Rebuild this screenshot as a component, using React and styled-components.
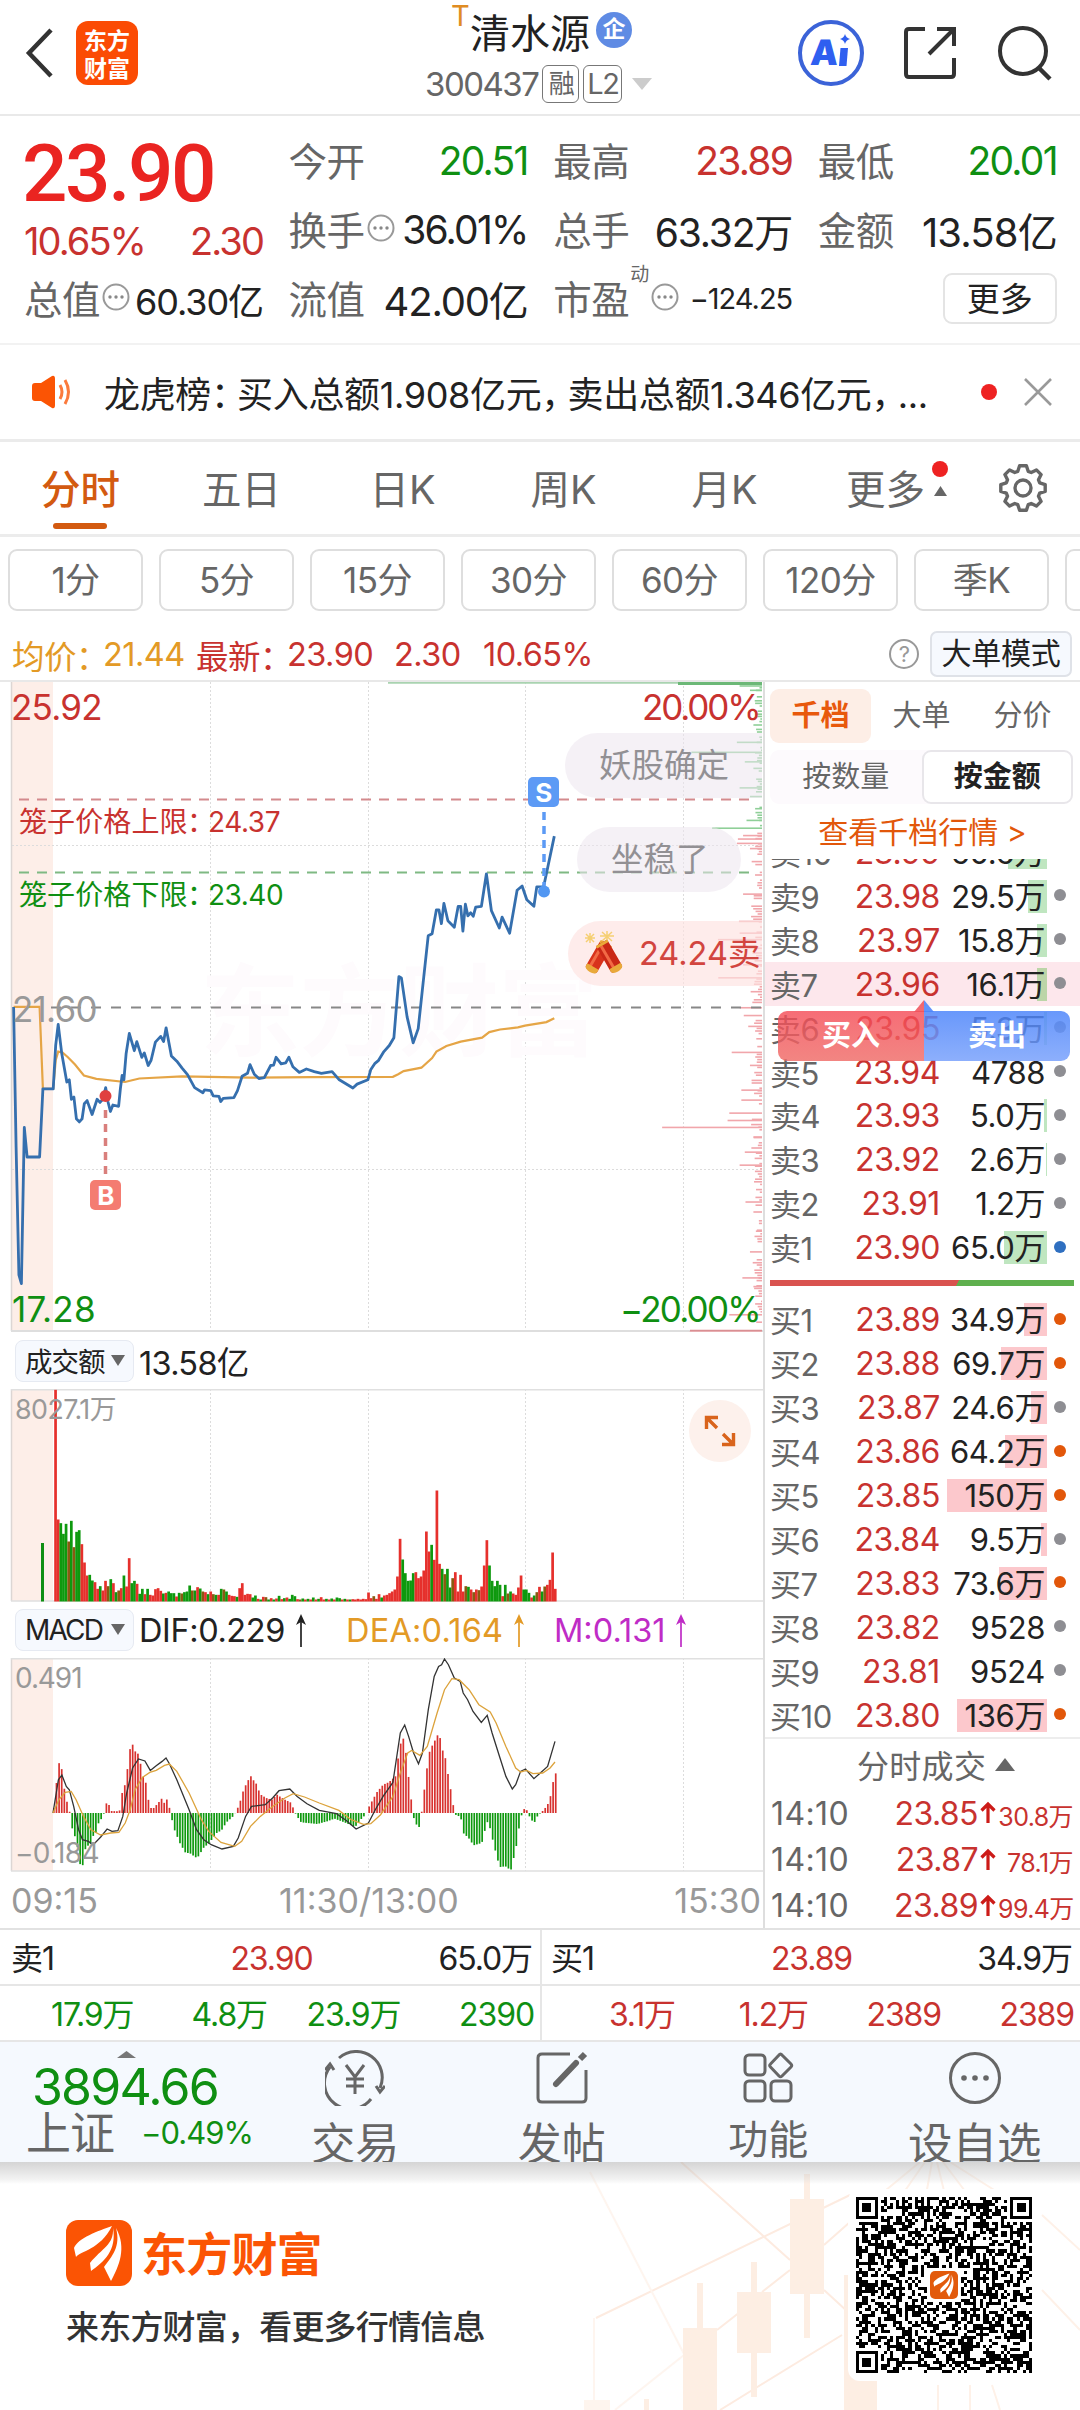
import React from "react";
import styled, { createGlobalStyle, css } from "styled-components";

const RED = "#c8322f";
const GREEN = "#0f8f12";
const GRAY = "#666";
const INK = "#222";
const ORANGE = "#e2570a";
const GOLD = "#e39a26";
const FONT = `Inter, "Noto Sans CJK SC", sans-serif`;

const Global = createGlobalStyle`
  * { box-sizing: border-box; }
  body { margin: 0; background: #fff; }
  svg { display: block; flex: none; }
  svg text { font-family: ${FONT}; }
`;

const Page = styled.div`
  width: 1080px;
  height: 2410px;
  overflow: hidden;
  background: #fff;
  color: ${INK};
  font-family: ${FONT};
  letter-spacing: -0.035em;
  white-space: nowrap;
`;

/* ---------- header ---------- */
const Header = styled.header`
  display: flex;
  align-items: center;
  height: 116px;
  padding-left: 25px;
  border-bottom: 2px solid #e9e9e9;
`;
const HeaderLeft = styled.div`
  display: flex;
  align-items: center;
  gap: 23px;
  width: 400px;
  padding-bottom: 8px;
`;
const BrandTile = styled.div`
  width: 62px;
  height: 64px;
  padding-top: 4px;
  border-radius: 12px;
  background: #fb4b04;
  color: #fff;
  font: 600 23px/28px "Noto Sans CJK SC", sans-serif;
  letter-spacing: 0;
  text-align: center;
  white-space: normal;
`;
const Title = styled.div`
  width: 373px;
  height: 114px;
`;
const NameRow = styled.div`
  display: flex;
  align-items: center;
  height: 62px;
  padding-left: 26px;
  font-size: 40px;
  letter-spacing: 0;
`;
const TMark = styled.span`
  align-self: flex-start;
  width: 19px;
  margin-top: -2px;
  color: #e08c22;
  font-size: 29px;
  line-height: 36px;
`;
const EnterpriseBadge = styled.span`
  width: 36px;
  height: 36px;
  margin: 0 0 2px 6px;
  border-radius: 50%;
  background: #5f8be4;
  color: #fff;
  font-size: 23px;
  font-weight: 700;
  line-height: 34px;
  text-align: center;
`;
const CodeRow = styled.div`
  display: flex;
  align-items: center;
  height: 44px;
  color: ${GRAY};
  font-size: 33px;
  letter-spacing: -1.5px;
`;
const CodeTag = styled.span`
  width: ${(p) => p.$w}px;
  height: 38px;
  margin-left: 4px;
  border: 1.5px solid #777;
  border-radius: 6px;
  font-size: ${(p) => p.$size}px;
  line-height: 35px;
  text-align: center;
`;
const HeaderIcons = styled.div`
  display: flex;
  align-items: center;
  padding-bottom: 8px;
`;
const AiBadge = styled.div`
  width: 66px;
  height: 66px;
  margin-right: 39px;
  border: 4px solid #3b63d8;
  border-radius: 50%;
  display: grid;
  place-items: center;
`;

/* ---------- quote ---------- */
const Quote = styled.section`
  display: grid;
  grid-template-columns: repeat(4, 239px);
  grid-template-rows: repeat(3, 69px);
  column-gap: 25.6px;
  height: 229px;
  padding: 10px 0 0 24px;
  border-bottom: 2px solid #f2f2f2;
`;
const PriceCell = styled.div`
  grid-row: span 2;
`;
const BigPrice = styled.div`
  height: 93px;
  padding-top: 2px;
  color: #ea2421;
  font: 500 80px/92px Roboto, sans-serif;
  letter-spacing: -2.4px;
  text-indent: -2px;
`;
const PriceChange = styled.div`
  display: flex;
  justify-content: space-between;
  color: ${RED};
  font-size: 38px;
  line-height: 44px;
  letter-spacing: -0.05em;
`;
const Stat = styled.div`
  display: flex;
  align-items: center;
  justify-content: space-between;
`;
const StatLabel = styled.span`
  display: flex;
  align-items: center;
  margin-top: -3px;
  color: ${GRAY};
  font-size: 38.5px;
  letter-spacing: -0.5px;
  gap: 2px;
`;
const StatValue = styled.span`
  color: ${(p) => p.$color || INK};
  font-size: ${(p) => p.$size || 39}px;
  letter-spacing: ${(p) => p.$ls ?? -0.045}em;
`;
const Dynamic = styled.sup`
  align-self: flex-start;
  margin: -7px 0 0 -1px;
  font-size: 19px;
  line-height: 26px;
`;
const MoreButton = styled.button`
  justify-self: end;
  align-self: center;
  width: 114px;
  height: 51px;
  border: 2px solid #e4e4e4;
  border-radius: 9px;
  background: #fff;
  color: ${INK};
  font: 400 33px/42px ${FONT};
  padding: 0;
`;

/* ---------- news ---------- */
const News = styled.section`
  display: flex;
  align-items: center;
  height: 97px;
  padding-left: 30px;
  border-bottom: 3px solid #ebebeb;
`;
const NewsText = styled.div`
  width: 849px;
  margin-left: 30px;
  font-size: 36px;
  letter-spacing: -0.35px;
  font-feature-settings: "halt";
`;
const Punct = styled.span`
  margin-right: 8.5px;
`;
const Dot = styled.i`
  display: block;
  width: ${(p) => p.$d}px;
  height: ${(p) => p.$d}px;
  border-radius: 50%;
  background: ${(p) => p.$color};
`;

/* ---------- tabs ---------- */
const Tabs = styled.nav`
  display: flex;
  height: 95px;
  border-bottom: 3px solid #ececec;
`;
const Tab = styled.div`
  position: relative;
  width: 161px;
  padding-top: 2px;
  color: ${(p) => (p.$on ? "#d35a10" : GRAY)};
  font-size: 39.5px;
  font-weight: ${(p) => (p.$on ? 500 : 400)};
  line-height: 92px;
  letter-spacing: 0;
  text-align: center;
  ${(p) =>
    p.$on &&
    css`
      &::after {
        content: "";
        position: absolute;
        left: 53px;
        bottom: 5px;
        width: 54px;
        height: 6px;
        border-radius: 3px;
        background: #d35a10;
      }
    `}
`;
const TabBadge = styled.span`
  position: absolute;
  left: 127px;
  top: 19px;
  display: grid;
  justify-items: center;
  gap: 9px;
`;
const GearSlot = styled.div`
  display: grid;
  place-items: center;
  width: 113px;
`;
const Periods = styled.div`
  display: flex;
  gap: 16px;
  height: 92px;
  padding: 12px 0 0 8px;
`;
const Period = styled.div`
  flex: none;
  width: 135px;
  height: 62px;
  border: 2px solid #dedede;
  border-radius: 9px;
  color: ${GRAY};
  font-size: 35px;
  line-height: 59px;
  text-align: center;
`;
const Summary = styled.div`
  display: flex;
  align-items: center;
  height: 51px;
  padding: 0 8px 1px 12px;
  color: ${RED};
  font-size: 32.5px;
`;
const SummaryItem = styled.span`
  width: ${(p) => p.$w}px;
  color: ${(p) => p.$color || RED};
`;
const HelpMark = styled.span`
  width: 30px;
  height: 30px;
  margin-left: auto;
  border: 2px solid #999;
  border-radius: 50%;
  color: #999;
  font-size: 22px;
  line-height: 26px;
  text-align: center;
`;
const ModeButton = styled.span`
  width: 142px;
  height: 46px;
  margin-left: 11px;
  border: 2px solid #dfe2e8;
  border-radius: 7px;
  background: #f6f9fe;
  color: ${INK};
  font-size: 30px;
  line-height: 41px;
  letter-spacing: -0.3px;
  text-align: center;
`;

/* ---------- charts ---------- */
const Main = styled.main`
  display: flex;
  height: 1250px;
  border-top: 2px solid #e8e8e8;
  border-bottom: 2px solid #e2e2e2;
`;
const Charts = styled.section`
  position: relative;
  width: 765px;
  border-right: 2px solid #dedede;
`;
const IndicatorBar = styled.div`
  display: flex;
  align-items: center;
  height: ${(p) => p.$h}px;
  padding-left: 15px;
  font-size: 32.5px;
  letter-spacing: -0.7px;
`;
const IndicatorPick = styled.span`
  display: flex;
  align-items: center;
  justify-content: space-between;
  width: 119px;
  height: 42px;
  margin-right: 5px;
  padding: 0 8px 1px 9px;
  border: 1.5px solid #e6eaf2;
  border-radius: 8px;
  background: #f6f9fe;
  font-size: ${(p) => p.$size}px;
  letter-spacing: ${(p) => p.$ls}px;
`;
const Reading = styled.span`
  display: flex;
  align-items: center;
  gap: 10px;
  width: ${(p) => p.$w}px;
  color: ${(p) => p.$color};
  letter-spacing: ${(p) => p.$ls}px;
`;
const TimeAxis = styled.div`
  display: grid;
  grid-template-columns: 268px auto 1fr;
  padding: 0 2px 0 11px;
  color: #999;
  font-size: 34px;
  line-height: 57px;
  letter-spacing: 0;
  > :last-child { text-align: right; }
`;
const Bubble = styled.div`
  position: absolute;
  left: ${(p) => p.$x}px;
  top: ${(p) => p.$y}px;
  width: ${(p) => p.$w}px;
  height: 65px;
  padding-left: ${(p) => p.$pad}px;
  border-radius: ${(p) => (p.$cut ? "33px 0 0 33px" : "33px")};
  background: ${(p) => (p.$hot ? "rgba(253,226,224,.66)" : "rgba(236,230,238,.55)")};
  color: ${(p) => (p.$hot ? "#d2453f" : "#929094")};
  font-size: 32.5px;
  line-height: 65px;
  letter-spacing: 0;
  overflow: hidden;
  display: flex;
  align-items: center;
  gap: 14px;
`;
const ExpandButton = styled.div`
  position: absolute;
  left: 689px;
  top: 718px;
  width: 62px;
  height: 62px;
  border-radius: 50%;
  background: #fdf1ec;
  display: grid;
  place-items: center;
`;

/* ---------- order book ---------- */
const Book = styled.section`
  width: 315px;
`;
const BookTabs = styled.div`
  display: flex;
  padding: 7px 0 0 5px;
`;
const BookTab = styled.div`
  width: 101px;
  height: 54px;
  border-radius: 9px;
  background: ${(p) => (p.$on ? "#fdeee6" : "none")};
  color: ${(p) => (p.$on ? "#e8590c" : GRAY)};
  font-size: 29px;
  font-weight: ${(p) => (p.$on ? 700 : 400)};
  line-height: 54px;
  letter-spacing: 0;
  text-align: center;
`;
const BookModes = styled.div`
  display: flex;
  margin: 7px 7px 0 5px;
  border-radius: 9px;
  background: #fdfafd;
`;
const BookMode = styled.div`
  flex: 1;
  height: 54px;
  border: 2px solid ${(p) => (p.$on ? "#e8e6ea" : "transparent")};
  border-radius: 9px;
  background: ${(p) => (p.$on ? "#fff" : "none")};
  color: ${(p) => (p.$on ? INK : GRAY)};
  font-size: 29px;
  font-weight: ${(p) => (p.$on ? 700 : 400)};
  line-height: 50px;
  letter-spacing: 0;
  text-align: center;
`;
const BookLink = styled.div`
  height: 55px;
  color: ${ORANGE};
  font-size: 30px;
  line-height: 56px;
  letter-spacing: 0;
  text-align: center;
`;
const Asks = styled.div`
  position: relative;
  height: 421px;
  overflow: hidden;
`;
const AskList = styled.div`
  margin-top: -28.5px;
`;
const Level = styled.div`
  display: grid;
  grid-template-columns: 52px 118px 107px 1fr;
  align-items: center;
  height: 43.93px;
  padding-left: 5px;
  background: ${(p) => (p.$hot ? "#fde7ec" : "none")};
  font-size: 32px;
  letter-spacing: -0.4px;
`;
const LevelName = styled.span`
  margin-top: -2px;
  color: ${GRAY};
  font-size: 31px;
`;
const LevelPrice = styled.span`
  color: ${RED};
  text-align: right;
`;
const LevelAmount = styled.span`
  height: 33px;
  padding-right: 2px;
  line-height: 34px;
  font-size: 31px;
  text-align: right;
  background: linear-gradient(${(p) => p.$fill}, ${(p) => p.$fill}) right / ${(p) => p.$bar}px 100% no-repeat;
`;
const TradePopup = styled.div`
  position: absolute;
  left: 13px;
  top: 141px;
`;
const TradeSides = styled.div`
  display: flex;
  width: 292px;
  height: 50px;
  margin-top: 11px;
  border-radius: 9px;
  overflow: hidden;
`;
const TradeSide = styled.div`
  flex: 1;
  background: ${(p) =>
    p.$buy
      ? "linear-gradient(rgba(244,72,84,.8), rgba(240,110,106,.84))"
      : "linear-gradient(rgba(76,132,250,.84), rgba(122,162,252,.86))"};
  color: #fff;
  font-size: 29px;
  font-weight: 700;
  line-height: 50px;
  letter-spacing: 0;
  text-align: center;
`;
const PopupTip = styled.svg`
  position: absolute;
  left: 136px;
  top: 0;
`;
const Ratio = styled.div`
  height: 6px;
  margin: 0 6px 12px 5px;
  background: linear-gradient(120deg, #d9534f 61.5%, #5fb04e 61.6%);
`;
const DealsTitle = styled.div`
  display: flex;
  align-items: center;
  gap: 9px;
  height: 53px;
  padding: 0 0 1px 92px;
  border-top: 2px solid #ededed;
  color: ${GRAY};
  font-size: 32px;
  letter-spacing: 0.3px;
`;
const Deal = styled.div`
  display: flex;
  align-items: center;
  height: 46.2px;
  padding: 0 7px 0 6px;
  color: ${RED};
  font-size: 32px;
`;
const DealTime = styled.span`
  color: ${GRAY};
  letter-spacing: 0.4px;
  margin-right: auto;
`;
const DealVolume = styled.span`
  width: 75px;
  padding-top: 3px;
  font-size: 25px;
  letter-spacing: -0.6px;
  text-align: right;
`;

/* ---------- bottom quote ---------- */
const Best = styled.section`
  display: grid;
  grid-template-columns: 540px 540px;
`;
const BestSide = styled.div`
  display: grid;
  grid-template-columns: ${(p) => (p.$four ? "repeat(4, 1fr)" : "1fr 1fr 1fr")};
  height: 56px;
  padding: 0 ${(p) => (p.$four ? 6 : 8)}px 0 ${(p) => (p.$four ? 0 : p.$right ? 9 : 11)}px;
  border-bottom: 2px solid #e6e6e6;
  border-left: ${(p) => (p.$right ? "2px solid #e6e6e6" : "0")};
  color: ${(p) => p.$color || INK};
  font-size: 32px;
  line-height: 57px;
  letter-spacing: -1.1px;
  text-align: right;
  > :first-child { text-align: ${(p) => (p.$four ? "right" : "left")}; }
`;
const BestPrice = styled.span`
  color: ${RED};
  text-align: center;
`;

/* ---------- nav ---------- */
const NavBar = styled.nav`
  display: flex;
  height: 120px;
  overflow: hidden;
  background: #f5f9fe;
`;
const IndexBox = styled.div`
  width: 252px;
  padding: 9px 0 0 26px;
`;
const IndexArrow = styled.div`
  padding-left: 91px;
  height: 7px;
`;
const IndexValue = styled.div`
  padding-left: 6px;
  color: ${GREEN};
  font-size: 50px;
  line-height: 58px;
  letter-spacing: -1.8px;
`;
const IndexRow = styled.div`
  display: flex;
  align-items: center;
  gap: 27px;
  height: 32px;
  color: ${GREEN};
  font-size: 31px;
  letter-spacing: -1px;
`;
const IndexName = styled.span`
  margin-top: -3px;
  color: ${GRAY};
  font-size: 45px;
`;
const NavItem = styled.div`
  display: flex;
  flex-direction: column;
  align-items: center;
  width: 206.5px;
  padding-top: 8px;
  color: ${GRAY};
  font-size: ${(p) => p.$size}px;
  line-height: 64px;
  letter-spacing: 0;
  > span { margin-top: ${(p) => p.$lift || 5}px; }
`;

/* ---------- footer ---------- */
const Footer = styled.footer`
  position: relative;
  display: flex;
  justify-content: space-between;
  height: 248px;
  background: #fff;
`;
const FooterArt = styled.svg`
  position: absolute;
  right: 0;
  top: 0;
`;
const FooterShade = styled.div`
  position: absolute;
  inset: 0 0 auto 0;
  height: 22px;
  background: linear-gradient(rgba(170, 170, 170, 0.5), rgba(220, 220, 220, 0.35) 80%, rgba(255, 255, 255, 0));
`;
const Brand = styled.div`
  padding: 58px 0 0 66px;
`;
const BrandRow = styled.div`
  display: flex;
  align-items: center;
  gap: 9px;
  height: 66px;
  color: #fb5404;
  font-size: 46px;
  font-weight: 700;
  letter-spacing: -0.8px;
`;
const BrandName = styled.span`
  margin-top: -4px;
`;
const Slogan = styled.div`
  margin-top: 19px;
  color: #333;
  font-size: 33px;
  font-weight: 500;
  line-height: 44px;
  letter-spacing: -0.8px;
`;
const QrCard = styled.div`
  position: relative;
  width: 192px;
  height: 192px;
  margin: 27px 40px 0 0;
  padding: 8px;
  border-radius: 12px;
  background: #fff;
`;
const QrLogo = styled.div`
  position: absolute;
  left: 80px;
  top: 80px;
  padding: 2px;
  background: #fff;
  border-radius: 6px;
`;

/* ---------- drawings ---------- */
const Triangle = ({ w, h, color = GRAY, down }) => (
  <svg width={w} height={h} viewBox="0 0 10 10" preserveAspectRatio="none">
    <path d={down ? "M0 0H10L5 10Z" : "M0 10H10L5 0Z"} fill={color} />
  </svg>
);

const MoreDots = () => (
  <svg width="28" height="28" viewBox="0 0 28 28">
    <circle cx="14" cy="14" r="12.5" fill="none" stroke="#999" strokeWidth="2" />
    {[8, 14, 20].map((x) => (
      <circle key={x} cx={x} cy="14" r="1.7" fill="#888" />
    ))}
  </svg>
);

const WingLogo = ({ size, fill = "#fb5404" }) => (
  <svg width={size} height={size} viewBox="0 0 66 66">
    <rect width="66" height="66" rx="12" fill={fill} />
    <g fill="#fff">
      <path d="M46 6C32 11 12 18 8 28L10 37C14 31 34 30 46 6Z" />
      <path d="M47 8C48 25 36 28 24 43L25 51C38 42 51 30 47 8Z" />
      <path d="M50 8C55 27 46 36 38 47L45 61C53 46 61 28 50 8Z" />
    </g>
  </svg>
);

const gearPath = () => {
  let d = "";
  for (let i = 0; i < 8; i++) {
    [[-0.3, 17.5], [-0.15, 22.5], [0.15, 22.5], [0.3, 17.5]].forEach(([o, r], k) => {
      const a = (i * Math.PI) / 4 + o - Math.PI / 2;
      d += `${i + k ? "L" : "M"}${(25 + r * Math.cos(a)).toFixed(1)} ${(25 + r * Math.sin(a)).toFixed(1)}`;
    });
  }
  return d + "Z";
};

const SmallArrow = ({ color }) => (
  <svg width="12" height="33" viewBox="0 0 12 33">
    <path d="M6 33V3" stroke={color} strokeWidth="1.7" />
    <path d="M6 0L11 11L6 8L1 11Z" fill={color} />
  </svg>
);

const DealArrow = () => (
  <svg width="20" height="24" viewBox="1 0 20 24">
    <path d="M11 22V4M4.500 9.500L11 3L17.500 9.500" fill="none" stroke="#cc1b18" strokeWidth="3.2" />
  </svg>
);

const Firecracker = () => (
  <svg width="44" height="46" viewBox="0 0 44 46">
    <g stroke="#f5cf73" strokeWidth="1.5">
      <path d="M9 2V12M4 7H14M5 3L13 11M13 3L5 11M26 0V12M19 5H33M21 1L31 10M31 1L21 10" />
    </g>
    <g transform="rotate(30 18 24)">
      <rect x="12" y="10" width="13" height="32" rx="3" fill="#d8321c" />
      <rect x="14.500" y="13" width="3" height="25" fill="#f26a45" />
      <path d="M12 37H25V40A6 3 0 0 1 12 40Z" fill="#e9a93a" />
      <rect x="12" y="10" width="13" height="3" fill="#e9a93a" />
    </g>
    <g transform="rotate(-30 27 24)">
      <rect x="21" y="10" width="13" height="32" rx="3" fill="#c92816" />
      <rect x="24" y="13" width="3" height="25" fill="#f26a45" />
      <path d="M21 37H34V40A6 3 0 0 1 21 40Z" fill="#e9a93a" />
      <rect x="21" y="10" width="13" height="3" fill="#e9a93a" />
    </g>
  </svg>
);

/* ---------- chart data ---------- */
const toPath = (flat, sx, sy, dy) => {
  let d = "";
  for (let i = 0; i < flat.length; i += 2)
    d += `${i ? "L" : "M"}${(flat[i] / sx).toFixed(1)} ${(flat[i + 1] / sy + dy).toFixed(1)}`;
  return d;
};

const PRICE = [38,777,45,1100,53,1395,60,1415,68,1055,76,1123,111,1123,120,966,149,966,156,865,163,817,173,885,187,950,194,945,200,990,207,985,214,1035,222,1042,230,1035,236,1000,244,993,258,1025,272,990,280,997,288,990,296,963,302,995,309,1018,316,1003,332,1006,337,965,342,935,347,945,353,885,362,838,376,878,383,857,397,893,404,883,415,912,423,900,435,858,450,845,458,857,465,825,480,890,495,902,510,918,525,933,545,963,568,975,573,968,590,970,597,982,613,983,618,995,625,988,655,986,665,970,678,937,693,930,700,910,712,932,725,942,740,940,758,912,766,911,773,893,787,908,800,906,809,893,820,915,838,928,858,920,880,926,900,930,930,926,950,945,988,964,1000,955,1030,945,1038,922,1050,907,1060,900,1075,880,1090,866,1103,848,1117,707,1124,710,1140,800,1157,860,1171,827,1185,720,1199,613,1210,608,1222,553,1229,553,1236,585,1243,538,1254,578,1272,593,1283,545,1290,545,1296,602,1303,540,1310,567,1318,560,1325,568,1332,547,1348,545,1362,470,1376,555,1398,595,1406,570,1427,607,1448,508,1462,498,1475,530,1495,545,1503,500,1522,500,1530,470,1552,383];
const AVERAGE = [38,777,111,777,120,966,149,966,156,900,163,880,175,882,190,893,210,910,235,935,270,943,350,950,390,942,510,937,700,940,870,939,1100,938,1115,932,1130,925,1180,917,1210,895,1222,880,1250,867,1290,857,1350,848,1370,835,1400,829,1450,824,1470,820,1530,812,1552,803];
const DEPTH = [35,580,45,610,60,630,75,625,100,630,125,620,165,572,188,440,210,595,225,620,250,628,270,580,290,610,318,625,345,600,363,500,380,590,388,575,398,572,410,610,440,615,515,590,578,578,605,580,620,517,640,575,678,590,708,518,740,612,777,580,795,592,820,605,880,557,910,610,967,585,990,585,1020,550,1037,545,1053,355,1075,620,1110,595,1140,580,1225,597,1248,620,1290,630,1340,610,1365,618,1400,588,1420,620,1460,625,1485,550,1525,435];
const VOLUME =
  "635r 246r 235g 203g 233g 180b 242g 163b 209g 214g 172r 117r 78r 80g 63g 58r 38r 46g 33r 62r 46b 67g 55r 28g 33b 40r 78g 45r 130r 55g 62g 53r 23g 38g 22r 38g 20r 18r 37r 40r 32r 24g 26r 30g 25g 25g 15r 26g 24b 28g 30g 48g 33b 33g 43r 39g 30b 28r 22g 30r 22b 20g 20r 38g 36b 30g 20r 17r 16r 14g 40r 55r 20r 23r 22r 12g 18g 8r 6g 14r 13b 6g 10r 6g 9r 17g 7r 10g 12r 8g 20g 16g 7r 6b 9g 6r 8g 6r 12g 6r 8g 13r 6r 8g 6r 9g 6r 12g 10g 6r 8g 6r 6g 7r 6r 8r 6r 8r 7r 27r 10r 16b 8r 22r 12g 18r 20r 25r 30r 36r 75r 188r 126g 85g 62g 63g 85g 88r 70r 75r 93r 210r 150r 170g 125r 333r 113r 98g 82b 98g 42g 70b 88r 30r 80r 30r 46b 44g 36r 28b 36r 34b 45r 108r 184r 108g 62g 46g 62g 50g 16r 50g 24b 30g 24r 20r 42r 78r 36g 36g 26g 12r 18g 28b 44r 30g 45b 50r 65r 147r 38r"
    .split(" ").map((s) => [parseInt(s, 10), s.slice(-1)]);
const MACD = [108,8,113,80,119,150,124,138,129,80,134,40,140,10,145,-42,151,-68,156,-95,161,-152,167,-160,172,-110,178,-98,183,-95,188,-70,194,-60,199,-32,205,-18,210,-3,215,29,220,27,226,6,242,5,247,58,252,75,258,128,263,190,269,205,274,185,279,182,285,148,290,110,296,90,301,40,306,15,312,15,322,32,328,43,333,30,338,43,344,15,349,-20,354,-50,365,-90,376,-118,387,-122,397,-133,403,-130,413,-105,425,-90,440,-60,450,-52,460,-28,475,-8,482,12,488,35,493,62,499,83,509,112,514,100,520,90,525,70,530,55,541,45,552,40,563,55,568,50,579,40,590,32,596,15,601,-3,606,-15,612,-28,645,-33,665,-25,680,-17,700,-28,722,-42,733,-20,744,-4,752,25,758,40,766,62,779,85,790,92,795,98,804,110,810,170,818,235,824,200,829,130,835,55,840,-10,845,-28,851,-50,856,-15,861,48,867,120,872,178,878,200,883,212,888,233,894,233,899,190,904,180,909,133,915,85,920,35,926,-5,937,-12,942,-60,953,-75,963,-97,980,-90,985,-60,990,-25,995,-35,1000,-68,1006,-105,1012,-140,1017,-162,1028,-160,1039,-172,1044,-140,1050,-100,1055,-50,1060,-10,1066,12,1072,8,1076,-8,1086,-32,1092,-12,1098,-2,1103,5,1113,22,1119,45,1124,88,1131,122];
const DIF = [108,640,119,540,126,526,135,560,141,570,150,620,160,690,168,720,180,725,190,735,205,712,218,688,228,695,240,693,250,650,258,580,270,505,282,478,295,484,306,512,318,498,330,485,338,475,345,492,360,540,385,630,400,690,415,720,430,735,452,748,475,740,485,715,500,650,512,620,540,615,555,595,568,573,590,568,605,590,625,612,650,632,685,642,705,662,725,688,750,670,765,628,780,590,800,548,815,400,824,376,832,410,842,460,852,492,860,460,872,330,884,230,893,200,899,195,905,178,913,195,925,235,937,245,943,280,952,300,963,335,980,368,992,347,1002,400,1018,475,1030,530,1043,568,1050,555,1060,515,1070,508,1087,537,1100,520,1115,500,1130,425];
const DEA = [108,640,120,600,133,578,145,575,155,600,170,650,185,690,205,706,225,700,242,698,255,670,265,630,275,570,290,533,305,518,318,512,335,497,345,493,360,515,385,580,410,660,425,695,450,728,478,740,492,725,510,680,530,650,555,620,580,595,597,582,620,592,650,610,690,632,715,660,740,674,755,672,775,645,800,590,815,520,830,460,838,452,855,467,870,440,890,340,905,270,920,237,935,240,955,270,975,315,998,337,1010,370,1030,440,1050,505,1060,517,1072,512,1085,522,1105,520,1120,505,1130,487];
const GRID_X = [210.5, 368.5, 525.5, 683.5];

const lerp = (flat, x) => {
  for (let i = 2; i < flat.length; i += 2)
    if (x <= flat[i]) {
      const t = (x - flat[i - 2]) / (flat[i] - flat[i - 2]);
      return flat[i - 1] + t * (flat[i + 1] - flat[i - 1]);
    }
  return 0;
};

const Grid = ({ h }) => (
  <>
    <rect x="11" y="0" width="42" height={h} fill="#fdeee8" />
    {GRID_X.map((x) => (
      <path key={x} d={`M${x} 0V${h}`} stroke="#dcdcdc" strokeDasharray="2 2" />
    ))}
    <path d={`M11.500 0V${h}`} stroke="#dcd6d4" strokeWidth="1.5" />
  </>
);

const depthBars = () => {
  const out = [];
  let seed = 9;
  for (let y = 5; y < 648; y += 2.6) {
    seed = (seed * 1103515245 + 12345) % 2147483648;
    const len = 1 + (seed % 997) / 997 * (y > 205 && y < 470 ? 10 : 7);
    if ((seed >> 8) % 5 > 1) out.push([y, len]);
  }
  for (let i = 0; i < DEPTH.length; i += 2) out.push([DEPTH[i] / 2.306 - 12, (645 - DEPTH[i + 1]) / 2.904]);
  return out;
};

const PriceChart = () => (
  <svg width="763" height="650" viewBox="0 0 763 650">
    <Grid h={649} />
    <text x="200" y="366" fontSize="100" fontWeight="700" fill="#fefbfd">东方财富</text>
    <path d="M12 163.500H762M12 487.500H762" stroke="#dcdcdc" strokeDasharray="2 2" />
    <path d="M11 649H763" stroke="#dedede" strokeWidth="2" />
    <path d="M388 .8H762" stroke="#a9d3b0" strokeWidth="2" />
    <path d="M678 1.500H762" stroke="#6cb877" strokeWidth="3" />
    {depthBars().map(([y, len], i) => (
      <rect key={i} x={762 - len} y={y} width={len} height="1.6" fill={y < 150 ? "#8fcf98" : "#f1a6ab"} />
    ))}
    <path d="M690 648.500H762" stroke="#d98f93" strokeWidth="1.5" />
    <path d="M19 117.500H750" stroke="#d38a8d" strokeWidth="2" strokeDasharray="10 8" />
    <path d="M19 190.500H750" stroke="#7fb983" strokeWidth="2" strokeDasharray="10 8" />
    <path d="M51 325.500H762" stroke="#888" strokeWidth="2" strokeDasharray="10 10" />
    <path d={toPath(AVERAGE, 2.8, 2.306, -12)} fill="none" stroke="#e5a546" strokeWidth="2.2" />
    <path d={toPath(PRICE, 2.8, 2.306, -12)} fill="none" stroke="#356fae" strokeWidth="2.8" strokeLinejoin="round" />
    <path d="M105.500 428V492" stroke="#d97f7c" strokeWidth="3.500" strokeDasharray="8 6" />
    <circle cx="105.500" cy="414" r="6" fill="#e04040" />
    <path d="M544 130V204" stroke="#5c9af5" strokeWidth="3.500" strokeDasharray="8 6" />
    <circle cx="544" cy="209.500" r="6" fill="#5297f2" />
    <rect x="90" y="498" width="31" height="30" rx="5" fill="#f47c71" />
    <rect x="528" y="95" width="31" height="30" rx="5" fill="#5c9af5" />
    <g fill="#fff" fontSize="26" fontWeight="700" textAnchor="middle">
      <text x="105.500" y="522.500">B</text>
      <text x="543.500" y="119.500">S</text>
    </g>
    <g fontSize="35">
      <text x="11" y="38" fill={RED} textLength="91">25.92</text>
      <text x="12" y="340" fill="#999" textLength="85">21.60</text>
      <text x="12" y="640" fill={GREEN} textLength="83">17.28</text>
      <text x="642" y="38" fill={RED} textLength="119">20.00%</text>
      <text x="620" y="640" fill={GREEN} textLength="141">−20.00%</text>
    </g>
    <g fontSize="28">
      <text x="19" y="149.500" fill={RED} textLength="168">笼子价格上限</text>
      <text x="187" y="149.500" fill={RED}>：</text>
      <text x="208" y="149.500" fill={RED} textLength="72">24.37</text>
      <text x="19" y="222.500" fill={GREEN} textLength="168">笼子价格下限</text>
      <text x="187" y="222.500" fill={GREEN}>：</text>
      <text x="208" y="222.500" fill={GREEN} textLength="75">23.40</text>
    </g>
  </svg>
);

const BAR_COLORS = { r: "#e6302c", g: "#0e990e", b: "#8a5a12" };

const VolumeChart = () => (
  <svg width="763" height="213" viewBox="0 0 763 213">
    <Grid h={212} />
    <path d="M11 .7H763M11 212H763" stroke="#e0e0e0" strokeWidth="1.6" />
    <rect x="41" y="154" width="3" height="58.500" fill={GREEN} />
    {VOLUME.map(([h, c], i) => (
      <rect key={i} x={54.2 + i * 2.63} y={212.5 - h / 3} width="2.700" height={h / 3} fill={BAR_COLORS[c]} />
    ))}
    <text x="15" y="30" fontSize="27.500" fill="#999" textLength="101" lengthAdjust="spacingAndGlyphs">8027.1万</text>
  </svg>
);

const MacdChart = () => (
  <svg width="763" height="214" viewBox="0 0 763 214">
    <Grid h={213} />
    <path d="M11 .7H763M11 213H763" stroke="#e0e0e0" strokeWidth="1.6" />
    {Array.from({ length: 192 }, (_, i) => {
      const x = 108.5 + i * 5.35;
      const v = lerp(MACD, x) / 3;
      return (
        <rect key={i} x={x / 2.036 - 0.3} y={v > 0 ? 155 - v : 155} width="1.700" height={Math.abs(v)} fill={v > 0 ? "#d8322f" : "#0e990e"} />
      );
    })}
    <path d={toPath(DIF, 2.036, 3, -58.3)} fill="none" stroke="#333" strokeWidth="1.3" />
    <path d={toPath(DEA, 2.036, 3, -58.3)} fill="none" stroke="#dca33c" strokeWidth="1.3" />
    <g fontSize="28" fill="#999">
      <text x="15" y="30" textLength="67">0.491</text>
      <text x="15" y="205" textLength="84">−0.184</text>
    </g>
  </svg>
);

const QR_N = 57;
const qrPath = () => {
  let seed = 20437;
  let d = "";
  const corner = (r, c) => {
    const near = (a) => a < 8;
    const fr = near(r) ? r : near(QR_N - 1 - r) ? QR_N - 1 - r : -1;
    const fc = near(c) ? c : near(QR_N - 1 - c) ? QR_N - 1 - c : -1;
    if (fr < 0 || fc < 0 || (r > 20 && c > 20)) return null;
    if (fr === 7 || fc === 7) return false;
    const ring = Math.max(Math.abs(fr - 3), Math.abs(fc - 3));
    return ring !== 2;
  };
  for (let r = 0; r < QR_N; r++)
    for (let c = 0; c < QR_N; c++) {
      seed = (seed * 1103515245 + 12345) % 2147483648;
      let on = (seed >> 12) % 100 < 52;
      const k = corner(r, c);
      if (k !== null) on = k;
      if (Math.abs(r - 28) < 6 && Math.abs(c - 28) < 6) on = false;
      if (on) d += `M${c} ${r}h1v1h-1z`;
    }
  return d;
};

const G_BAR = "#bfe6c0";
const R_BAR = "#fcc8cc";
const asks = [
  ["卖10", "23.99", "60.6万", 39, "#8e8e93"],
  ["卖9", "23.98", "29.5万", 19, "#8e8e93"],
  ["卖8", "23.97", "15.8万", 10, "#8e8e93"],
  ["卖7", "23.96", "16.1万", 10, "#8e8e93"],
  ["卖6", "23.95", "5.3万", 3, "#8e8e93"],
  ["卖5", "23.94", "4788", 0, "#8e8e93"],
  ["卖4", "23.93", "5.0万", 3, "#8e8e93"],
  ["卖3", "23.92", "2.6万", 1, "#8e8e93"],
  ["卖2", "23.91", "1.2万", 0, "#8e8e93"],
  ["卖1", "23.90", "65.0万", 43, "#2f6fc0"],
];
const bids = [
  ["买1", "23.89", "34.9万", 23, ORANGE],
  ["买2", "23.88", "69.7万", 46, ORANGE],
  ["买3", "23.87", "24.6万", 16, "#8e8e93"],
  ["买4", "23.86", "64.2万", 42, ORANGE],
  ["买5", "23.85", "150万", 100, ORANGE],
  ["买6", "23.84", "9.5万", 6, "#8e8e93"],
  ["买7", "23.83", "73.6万", 48, ORANGE],
  ["买8", "23.82", "9528", 0, "#8e8e93"],
  ["买9", "23.81", "9524", 0, "#8e8e93"],
  ["买10", "23.80", "136万", 90, ORANGE],
];
const deals = [["23.85", "30.8万"], ["23.87", "78.1万"], ["23.89", "99.4万"]];

const LevelDot = styled(Dot)`
  margin: 0 0 2px 7px;
`;
const NewsDot = styled(Dot)`
  margin: 0 26px 0 28px;
`;
const SearchIcon = styled.svg`
  margin-left: 39px;
`;

const Levels = ({ rows, fill }) =>
  rows.map(([name, price, amount, bar, dot]) => (
    <Level key={name} $hot={name === "卖7"}>
      <LevelName>{name}</LevelName>
      <LevelPrice>{price}</LevelPrice>
      <LevelAmount $fill={name === "卖7" ? "#bcd5a8" : fill} $bar={bar}>{amount}</LevelAmount>
      <LevelDot $d={12} $color={dot} />
    </Level>
  ));

export default function App() {
  return (
    <Page>
      <Global />
      <Header>
        <HeaderLeft>
          <svg width="28" height="50" viewBox="0 0 28 50">
            <path d="M26 2L4 25L26 48" fill="none" stroke="#333" strokeWidth="4.500" />
          </svg>
          <BrandTile>东方<br />财富</BrandTile>
        </HeaderLeft>
        <Title>
          <NameRow>
            <TMark>T</TMark>
            清水源
            <EnterpriseBadge>企</EnterpriseBadge>
          </NameRow>
          <CodeRow>
            300437
            <CodeTag $w={37} $size={26}>融</CodeTag>
            <CodeTag $w={39} $size={29}>L2</CodeTag>
            <svg width="30" height="12" viewBox="0 0 30 12"><path d="M10 0H30L20 12Z" fill="#ccc" /></svg>
          </CodeRow>
        </Title>
        <HeaderIcons>
          <AiBadge>
            <svg width="44" height="40" viewBox="0 0 44 40">
              <text x="3" y="32" fontSize="35" fontWeight="900" fill="#2f5ff0" letterSpacing="0" transform="skewX(-4)">A</text>
              <path d="M31.500 15H39L37.500 33H30Z" fill="#2f5ff0" />
              <path d="M36 1Q37 5 41 6Q37 7 36 11Q35 7 31 6Q35 5 36 1Z" fill="#2f5ff0" />
            </svg>
          </AiBadge>
          <svg width="55" height="54" viewBox="0 0 55 54">
            <path d="M22 3H6Q3 3 3 6V48Q3 51 6 51H48Q51 51 51 48V32M34 3H51V20M51 3L26 28" fill="none" stroke="#333" strokeWidth="4" />
          </svg>
          <SearchIcon width="56" height="56" viewBox="0 0 56 56">
            <circle cx="26" cy="26" r="23" fill="none" stroke="#333" strokeWidth="4" />
            <path d="M41 42L53 54" stroke="#333" strokeWidth="4.500" />
          </SearchIcon>
        </HeaderIcons>
      </Header>

      <Quote>
        <PriceCell>
          <BigPrice>23.90</BigPrice>
          <PriceChange><span>10.65%</span><span>2.30</span></PriceChange>
        </PriceCell>
        <Stat><StatLabel>今开</StatLabel><StatValue $color={GREEN}>20.51</StatValue></Stat>
        <Stat><StatLabel>最高</StatLabel><StatValue $color={RED}>23.89</StatValue></Stat>
        <Stat><StatLabel>最低</StatLabel><StatValue $color={GREEN}>20.01</StatValue></Stat>
        <Stat><StatLabel>换手<MoreDots /></StatLabel><StatValue>36.01%</StatValue></Stat>
        <Stat><StatLabel>总手</StatLabel><StatValue $ls={-0.03}>63.32万</StatValue></Stat>
        <Stat><StatLabel>金额</StatLabel><StatValue $size={40} $ls={-0.022}>13.58亿</StatValue></Stat>
        <Stat><StatLabel>总值<MoreDots /></StatLabel><StatValue $size={36} $ls={-0.03}>60.30亿</StatValue></Stat>
        <Stat><StatLabel>流值</StatLabel><StatValue $size={40} $ls={-0.03}>42.00亿</StatValue></Stat>
        <Stat>
          <StatLabel>市盈<Dynamic>动</Dynamic><MoreDots /></StatLabel>
          <StatValue $size={29} $ls={-0.035}>−124.25</StatValue>
        </Stat>
        <MoreButton>更多</MoreButton>
      </Quote>

      <News>
        <svg width="44" height="36" viewBox="0 0 44 36">
          <path d="M2 12Q2 9 5 9H11L22 2Q25 1 25 5V31Q25 35 22 34L11 27H5Q2 27 2 24Z" fill="#fb5404" />
          <path d="M30 11Q34 18 30 25M35 6Q42 18 35 30" fill="none" stroke="#fb7a3c" strokeWidth="3" />
        </svg>
        <NewsText>
          龙虎榜<Punct>：</Punct>买入总额1.908亿元<Punct>，</Punct>卖出总额1.346亿元<Punct>，</Punct>...
        </NewsText>
        <NewsDot $d={16} $color="#ee2222" />
        <svg width="30" height="30" viewBox="0 0 30 30">
          <path d="M2 2L28 28M28 2L2 28" stroke="#999" strokeWidth="2.600" />
        </svg>
      </News>

      <Tabs>
        <Tab $on>分时</Tab>
        <Tab>五日</Tab>
        <Tab>日K</Tab>
        <Tab>周K</Tab>
        <Tab>月K</Tab>
        <Tab>
          更多
          <TabBadge>
            <Dot $d={16} $color="#ee2222" />
            <Triangle w={13} h={10} />
          </TabBadge>
        </Tab>
        <GearSlot>
          <svg width="50" height="50" viewBox="0 0 50 50" fill="none" stroke={GRAY} strokeWidth="3.400" strokeLinejoin="round">
            <path d={gearPath()} />
            <circle cx="25" cy="25" r="8" />
          </svg>
        </GearSlot>
      </Tabs>

      <Periods>
        {["1分", "5分", "15分", "30分", "60分", "120分", "季K", ""].map((t) => (
          <Period key={t}>{t}</Period>
        ))}
      </Periods>

      <Summary>
        <SummaryItem $w={91} $color={GOLD}>均价：</SummaryItem>
        <SummaryItem $w={93} $color={GOLD}>21.44</SummaryItem>
        <SummaryItem $w={91}>最新：</SummaryItem>
        <SummaryItem $w={107}>23.90</SummaryItem>
        <SummaryItem $w={89}>2.30</SummaryItem>
        <SummaryItem $w={120}>10.65%</SummaryItem>
        <HelpMark>?</HelpMark>
        <ModeButton>大单模式</ModeButton>
      </Summary>

      <Main>
        <Charts>
          <PriceChart />
          <IndicatorBar $h={57}>
            <IndicatorPick $size={27.5} $ls={-1}>成交额<Triangle w={14} h={11} down /></IndicatorPick>
            13.58亿
          </IndicatorBar>
          <VolumeChart />
          <IndicatorBar $h={56}>
            <IndicatorPick $size={28} $ls={-1.8}>MACD<Triangle w={14} h={11} down /></IndicatorPick>
            <Reading $w={207} $ls={-0.4} $color={INK}>DIF:0.229<SmallArrow color={INK} /></Reading>
            <Reading $w={208} $ls={0.2} $color={GOLD}>DEA:0.164<SmallArrow color={GOLD} /></Reading>
            <Reading $ls={0} $color="#bf2cc6">M:0.131<SmallArrow color="#bf2cc6" /></Reading>
          </IndicatorBar>
          <MacdChart />
          <TimeAxis><span>09:15</span><span>11:30/13:00</span><span>15:30</span></TimeAxis>
          <Bubble $x={565} $y={51} $w={197} $pad={34} $cut>妖股确定</Bubble>
          <Bubble $x={577} $y={145} $w={164} $pad={34}>坐稳了</Bubble>
          <Bubble $x={568} $y={239} $w={194} $pad={13} $cut $hot><Firecracker />24.24卖</Bubble>
          <ExpandButton>
            <svg width="34" height="34" viewBox="0 0 34 34" fill="none" stroke="#d9641c" strokeWidth="3.400">
              <path d="M3.500 15V3.500H15M3.500 3.500L14 14M19 30.500H30.500V19M30.500 30.500L20 20" />
            </svg>
          </ExpandButton>
        </Charts>

        <Book>
          <BookTabs>
            <BookTab $on>千档</BookTab>
            <BookTab>大单</BookTab>
            <BookTab>分价</BookTab>
          </BookTabs>
          <BookModes>
            <BookMode>按数量</BookMode>
            <BookMode $on>按金额</BookMode>
          </BookModes>
          <BookLink>查看千档行情 &gt;</BookLink>
          <Asks>
            <AskList><Levels rows={asks} fill={G_BAR} /></AskList>
            <TradePopup>
              <PopupTip width="20" height="12" viewBox="0 0 20 12">
                <path d="M10 0V12H0Z" fill="rgba(240,80,90,.86)" />
                <path d="M10 0V12H20Z" fill="rgba(76,132,250,.88)" />
              </PopupTip>
              <TradeSides>
                <TradeSide $buy>买入</TradeSide>
                <TradeSide>卖出</TradeSide>
              </TradeSides>
            </TradePopup>
          </Asks>
          <Ratio />
          <Levels rows={bids} fill={R_BAR} />
          <DealsTitle>分时成交<Triangle w={20} h={13} /></DealsTitle>
          {deals.map(([price, vol]) => (
            <Deal key={price}>
              <DealTime>14:10</DealTime>
              {price}
              <DealArrow />
              <DealVolume>{vol}</DealVolume>
            </Deal>
          ))}
        </Book>
      </Main>

      <Best>
        <BestSide><span>卖1</span><BestPrice>23.90</BestPrice><span>65.0万</span></BestSide>
        <BestSide $right><span>买1</span><BestPrice>23.89</BestPrice><span>34.9万</span></BestSide>
        <BestSide $four $color={GREEN}><span>17.9万</span><span>4.8万</span><span>23.9万</span><span>2390</span></BestSide>
        <BestSide $four $right $color={RED}><span>3.1万</span><span>1.2万</span><span>2389</span><span>2389</span></BestSide>
      </Best>

      <NavBar>
        <IndexBox>
          <IndexArrow><Triangle w={19} h={7} color="#777" /></IndexArrow>
          <IndexValue>3894.66</IndexValue>
          <IndexRow><IndexName>上证</IndexName>−0.49%</IndexRow>
        </IndexBox>
        <NavItem $size={44} $lift={6}>
          <svg width="60" height="56" viewBox="0 0 60 56" fill="none" stroke={GRAY} strokeWidth="3">
            <path d="M14 8A26 26 0 0 1 55 38M46 49A26 26 0 0 1 5 17M60 36L55 42L51 36M0 20L5 14L9 20" />
            <path d="M21 15L30 27L39 15M30 27V44M21 29H39M21 36H39" />
          </svg>
          <span>交易</span>
        </NavItem>
        <NavItem $size={44} $lift={6}>
          <svg width="56" height="56" viewBox="0 0 56 56" fill="none" stroke={GRAY} strokeWidth="3">
            <path d="M36 4H8Q4 4 4 8V48Q4 52 8 52H48Q52 52 52 48V20" />
            <path d="M22 34L42 13" strokeWidth="6" strokeLinecap="round" />
            <path d="M46 9L51 4" strokeWidth="6" />
          </svg>
          <span>发帖</span>
        </NavItem>
        <NavItem $size={40} $lift={2}>
          <svg width="56" height="56" viewBox="0 0 56 56" fill="none" stroke={GRAY} strokeWidth="3">
            <rect x="5" y="5" width="20" height="20" rx="4" />
            <rect x="5" y="31" width="20" height="20" rx="4" />
            <rect x="31" y="31" width="20" height="20" rx="4" />
            <path d="M39 5Q40.500 3 42 5L51 14Q52.500 15.500 51 17L42 26Q40.500 27.500 39 26L30.500 17Q29 15.500 30.500 14Z" />
          </svg>
          <span>功能</span>
        </NavItem>
        <NavItem $size={44.5} $lift={6}>
          <svg width="56" height="56" viewBox="0 0 56 56">
            <circle cx="28" cy="28" r="24.500" fill="none" stroke={GRAY} strokeWidth="3" />
            {[17, 28, 39].map((x) => <circle key={x} cx={x} cy="28" r="2.800" fill={GRAY} />)}
          </svg>
          <span>设自选</span>
        </NavItem>
      </NavBar>

      <Footer>
        <FooterArt width="520" height="248" viewBox="560 2162 520 248">
          <g stroke="#fef1e8" strokeWidth="2" fill="none">
            <path d="M681 2162L790 2260M824 2290L848 2312M596 2318L850 2195M717 2330L740 2312M762 2292L790 2270M824 2245L850 2222M720 2410L842 2335" stroke="#fdebe0" />
            <path d="M590 2172L684 2354M615 2410L684 2355M594 2318V2400" stroke="#fef5ef" />
            <path d="M920 2162L880 2195M925 2162L902 2195M932 2162L926 2195M937 2162L945 2195M943 2162L968 2195M950 2162L1002 2195M1042 2215L1080 2250M1042 2290L1080 2330M938 2385V2410M970 2385V2410M992 2385L1000 2410" />
          </g>
          <g fill="#fdeee3">
            <rect x="683" y="2328" width="34" height="82" />
            <rect x="697" y="2283" width="6" height="46" />
            <rect x="737" y="2292" width="34" height="61" />
            <rect x="751" y="2262" width="6" height="135" />
            <rect x="790" y="2199" width="34" height="95" />
            <rect x="804" y="2174" width="6" height="164" />
            <rect x="844" y="2275" width="33" height="135" />
            <rect x="644" y="2399" width="5" height="11" />
            <rect x="584" y="2400" width="26" height="10" opacity=".6" />
          </g>
        </FooterArt>
        <FooterShade />
        <Brand>
          <BrandRow><WingLogo size={66} /><BrandName>东方财富</BrandName></BrandRow>
          <Slogan>来东方财富，看更多行情信息</Slogan>
        </Brand>
        <QrCard>
          <svg width="176" height="176" viewBox={`0 0 ${QR_N} ${QR_N}`} shapeRendering="crispEdges">
            <path d={qrPath()} fill="#000" />
          </svg>
          <QrLogo><WingLogo size={28} fill="#e25a0c" /></QrLogo>
        </QrCard>
      </Footer>
    </Page>
  );
}
